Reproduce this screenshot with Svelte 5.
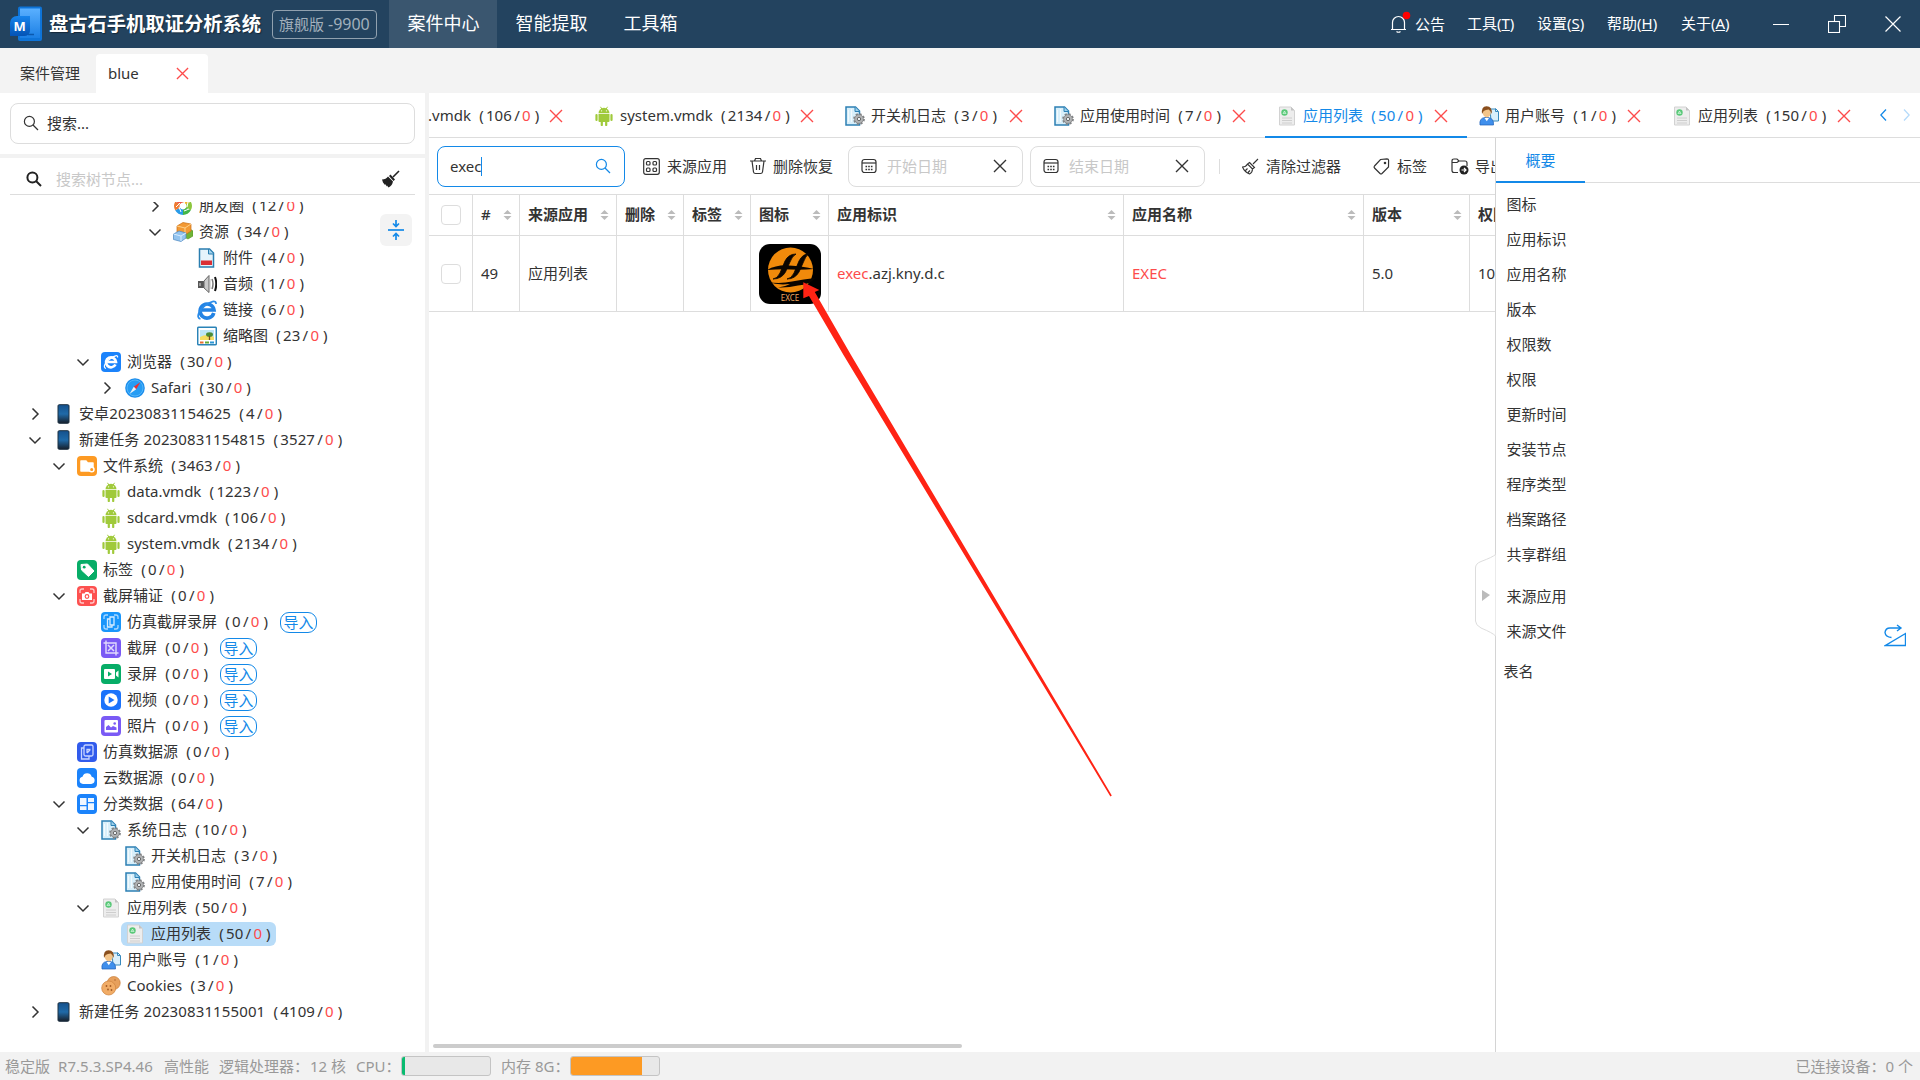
<script>
  const menus = ['案件中心', '智能提取', '工具箱'];
  const tools = [['工具', 'T'], ['设置', 'S'], ['帮助', 'H'], ['关于', 'A']];

  // [depth, arrow, icon, label, count, flags]
  const tree = [
    [4, 'r', 'moments', '朋友圈', '12'],
    [4, 'd', 'cubes', '资源', '34'],
    [5, '', 'attach', '附件', '4'],
    [5, '', 'audio', '音频', '1'],
    [5, '', 'ie', '链接', '6'],
    [5, '', 'thumb', '缩略图', '23'],
    [2, 'd', 'browser', '浏览器', '30'],
    [3, 'r', 'safari', 'Safari', '30'],
    [0, 'r', 'phone', '安卓20230831154625', '4'],
    [0, 'd', 'phone', '新建任务 20230831154815', '3527'],
    [1, 'd', 'folder', '文件系统', '3463'],
    [2, '', 'android', 'data.vmdk', '1223'],
    [2, '', 'android', 'sdcard.vmdk', '106'],
    [2, '', 'android', 'system.vmdk', '2134'],
    [1, '', 'tag', '标签', '0'],
    [1, 'd', 'camera', '截屏辅证', '0'],
    [2, '', 'simshot', '仿真截屏录屏', '0', 'import'],
    [2, '', 'crop', '截屏', '0', 'import'],
    [2, '', 'record', '录屏', '0', 'import'],
    [2, '', 'video', '视频', '0', 'import'],
    [2, '', 'photo', '照片', '0', 'import'],
    [1, '', 'simdata', '仿真数据源', '0'],
    [1, '', 'cloud', '云数据源', '0'],
    [1, 'd', 'grid', '分类数据', '64'],
    [2, 'd', 'log', '系统日志', '10'],
    [3, '', 'log', '开关机日志', '3'],
    [3, '', 'log', '应用使用时间', '7'],
    [2, 'd', 'applist', '应用列表', '50'],
    [3, '', 'applist', '应用列表', '50', 'selected'],
    [2, '', 'user', '用户账号', '1'],
    [2, '', 'cookie', 'Cookies', '3'],
    [0, 'r', 'phone', '新建任务 20230831155001', '4109']
  ].map(([depth, arrow, icon, label, count, flag]) => ({ depth: depth > 3 ? depth + 1 : depth, arrow, icon, label, count, flag }));

  const tabs = [
    { icon: 'android', label: 'system.vmdk', count: '2134', w: 251 },
    { icon: 'log', label: '开关机日志', count: '3', w: 209 },
    { icon: 'log', label: '应用使用时间', count: '7', w: 223 },
    { icon: 'applist', label: '应用列表', count: '50', w: 202, active: true },
    { icon: 'user', label: '用户账号', count: '1', w: 193 },
    { icon: 'applist', label: '应用列表', count: '150', w: 210 }
  ];

  const columns = ['#', '来源应用', '删除', '标签', '图标', '应用标识', '应用名称', '版本'];
  const fields = ['图标', '应用标识', '应用名称', '版本', '权限数', '权限', '更新时间', '安装节点', '程序类型', '档案路径', '共享群组'];
</script>

{#snippet count(n)}<span class="count"><i class="po">(</i>{n}<i class="sl">/</i><b>0</b><i class="pc">)</i></span>{/snippet}

{#snippet cross(size)}
  <svg class="cross" width={size} height={size} viewBox="0 0 14 14"><path d="M1 1 13 13M13 1 1 13" fill="none" stroke="currentColor" stroke-width="1.4" /></svg>
{/snippet}

{#snippet lens(size, sw)}
  <svg width={size} height={size} viewBox="0 0 16 16" fill="none" stroke="currentColor" stroke-width={sw}><circle cx="6.4" cy="6.4" r="5" /><path d="m10 10 5 5" /></svg>
{/snippet}

{#snippet calendar()}
  <svg width="16" height="16" viewBox="0 0 16 16" fill="none" stroke="#333" stroke-width="1.2"><rect x="1" y="1.5" width="14" height="13" rx="2.5" /><path d="M1 5h14" /><path d="M4.5 8.5h7M4.5 11.5h7" stroke-width="1.6" stroke-dasharray="1.6 1.1" /></svg>
{/snippet}

{#snippet icon(name)}
  <svg class="ic" width="20" height="20" viewBox="0 0 20 20">
    {#if name === 'moments'}
      <g fill="none" stroke-width="5.5"><path d="M10 3.8A6.2 6.2 0 0 1 15.4 7" stroke="#f4b52a" /><path d="M15.4 7a6.2 6.2 0 0 1 0 6" stroke="#8cc63e" /><path d="M15.4 13a6.2 6.2 0 0 1-5.4 3.2" stroke="#43b649" /><path d="M10 16.2A6.2 6.2 0 0 1 4.6 13" stroke="#299be8" /><path d="M4.6 13a6.2 6.2 0 0 1 0-6" stroke="#ee7a30" /><path d="M4.6 7A6.2 6.2 0 0 1 10 3.8" stroke="#ee5340" /></g>
      <path d="m8 4 4 3M15 6l-1 5M16 13l-5 2M8 16l-2-5M3 11l4-4" stroke="#fff" />
    {:else if name === 'cubes'}
      <path d="m12 9 5-2 3 2v5l-5 3-4-2z" fill="#6fb436" stroke="#528f25" stroke-width=".6" />
      <path d="m4 4 6-3.5L18 2v7l-6 4-8-3z" fill="#f39a35" stroke="#c96f14" stroke-width=".7" /><path d="m4 4 8 2 6-4M12 6v7" stroke="#ffd28c" fill="none" />
      <path d="m.5 12 5.5-3 7 2v5l-5 3.5-7.5-2z" fill="#93c4ef" stroke="#4a86c0" stroke-width=".7" /><path d="m.5 12 7.5 2 5-3M8 14v5" stroke="#d8edff" fill="none" />
    {:else if name === 'attach'}
      <path d="M2.5 1h10l4 4v14h-14z" fill="#e6f3fb" stroke="#2a7eb0" stroke-width="1.5" /><path d="M11.5 1v5h5" fill="#9fd0ec" stroke="#2a7eb0" /><path d="M4 12.500h11V17H4z" fill="#db2f35" />
    {:else if name === 'audio'}
      <path d="M1 7h6v7H1z" fill="#565656" /><path d="m7 7 5-5.500v17L7 14z" fill="#c9c9c9" stroke="#666" /><path d="M3 9v3M13.500 5v10" stroke="#ddd" /><path d="M15 5q2 5 0 10" fill="none" stroke="#777" stroke-width="1.500" /><path d="M18 3q2.500 7 0 14" fill="none" stroke="#111" stroke-width="2" />
    {:else if name === 'ie'}
      <path d="M16.800 13A7 7 0 1 1 17 10H5" fill="none" stroke="#2383e4" stroke-width="3.600" /><path d="M3.500 19C-1.500 18 2 10 8 5.500 13 1.500 19.500-.5 19 4" fill="none" stroke="#2b8ce9" stroke-width="1.700" />
    {:else if name === 'thumb'}
      <rect x=".7" y="1.200" width="18.600" height="17.600" rx="1" fill="#fff" stroke="#2a83b7" stroke-width="1.500" /><path d="M3 4h14v10H3z" fill="#bde6f8" /><path d="M3 11q7-4 14 0v3H3z" fill="#f4dd62" /><ellipse cx="12.500" cy="8.500" rx="3.500" ry="2.300" fill="#4c8c35" /><path d="M12.500 10v4" stroke="#754c24" stroke-width="1.300" /><path d="M3 16.500h3.500" stroke="#e66d31" stroke-width="2" /><path d="M8 16.500h4" stroke="#67a832" stroke-width="2" /><path d="M13 16.500h4" stroke="#2c96d4" stroke-width="2" />
    {:else if name === 'browser'}
      <rect width="20" height="20" rx="4" fill="#1b83fb" /><path d="M14.500 12.500A5 5 0 1 1 15 10H6.500" fill="none" stroke="#fff" stroke-width="2.700" /><path d="M5 16.500c-4-1 0-7 4-9.500 4-3.500 8.500-4.500 7.500-1.500" fill="none" stroke="#fff" stroke-width="1.200" />
    {:else if name === 'safari'}
      <circle cx="10" cy="10" r="9.800" fill="#1d8eec" /><circle cx="10" cy="10" r="8" fill="#259cf4" stroke="#52b6fb" /><path d="m15.500 4-4.300 7.200L8.800 8.800z" fill="#ee2f2f" /><path d="m4.500 16 4.300-7.200 2.400 2.400z" fill="#e9f1f8" />
    {:else if name === 'phone'}
      <defs><linearGradient id="ph" x2="0" y2="1"><stop offset="0" stop-color="#14518d" /><stop offset=".5" stop-color="#1f6aa8" /><stop offset="1" stop-color="#171f2a" /></linearGradient></defs><rect x="5" y=".7" width="11" height="18.600" rx="1.200" fill="url(#ph)" stroke="#1d3040" />
    {:else if name === 'folder'}
      <rect width="20" height="20" rx="4" fill="#fd9a23" /><path d="M4 5h5l1.500 2H16v8H4z" fill="none" stroke="#fff" stroke-width="1.500" stroke-linejoin="round" /><path d="M4 5h5l1.500 2H16v4l-4 4H4z" fill="#fff" /><circle cx="14.700" cy="13.500" r="2.300" fill="#fd9a23" stroke="#fff" stroke-width="1.500" />
    {:else if name === 'android'}
      <path d="M4.500 7.300a5.500 5.500 0 0 1 11 0z" fill="#a0ca3b" /><path d="M4.500 8.100h11v7a1 1 0 0 1-1 1h-9a1 1 0 0 1-1-1z" fill="#a0ca3b" /><path d="M2.500 9v5M17.500 9v5M7.800 15v4M12.200 15v4" stroke="#a0ca3b" stroke-width="2.200" stroke-linecap="round" /><path d="M6.500.8 7.800 3M13.500.8 12.200 3" stroke="#a0ca3b" /><circle cx="7.600" cy="4.800" r=".6" fill="#fff" /><circle cx="12.400" cy="4.800" r=".6" fill="#fff" />
    {:else if name === 'tag'}
      <rect width="20" height="20" rx="4" fill="#07ad67" /><path d="M4 4.500 10.500 4l6.500 7-5.500 5.500L4.500 10z" fill="#fff" stroke="#fff" stroke-linejoin="round" /><circle cx="7.200" cy="7.200" r="1.400" fill="#07ad67" />
    {:else if name === 'camera'}
      <rect width="20" height="20" rx="4" fill="#fd5150" /><path d="M3 7V5q0-2 2-2h2M13 3h2q2 0 2 2v2M17 13v2q0 2-2 2h-2M7 17H5q-2 0-2-2v-2" fill="none" stroke="#ffc9c9" stroke-width="1.300" /><path d="M5 7.500h2.500L8.500 6h3l1 1.500H15V14H5z" fill="#fff" /><circle cx="10" cy="10.500" r="1.800" fill="#fff" stroke="#fd5150" stroke-width="1.200" />
    {:else if name === 'simshot'}
      <rect width="20" height="20" rx="4" fill="#1996fb" /><path d="M3 7V5q0-2 2-2h2M13 3h2q2 0 2 2v2M17 13v2q0 2-2 2h-2M7 17H5q-2 0-2-2v-2" fill="none" stroke="#a8d7ff" stroke-width="1.300" /><path d="M9 5h4v8H9zM9 7H6.500v8H11v-2" fill="none" stroke="#d4ecff" stroke-width="1.300" />
    {:else if name === 'crop'}
      <rect width="20" height="20" rx="4" fill="#7a5af5" /><path d="M5 2.500V15h12.500M2.500 5H15v12.500" fill="none" stroke="#e1dafd" stroke-width="1.400" /><path d="m7 7 6 6M13 7l-6 6" stroke="#e1dafd" stroke-width="1.500" />
    {:else if name === 'record'}
      <rect width="20" height="20" rx="4" fill="#07ad67" /><rect x="3" y="5" width="11" height="10" rx="1" fill="#fff" /><path d="m7 7.500 4 2.500-4 2.500z" fill="#07ad67" /><path d="M15 8.500 17.500 6.500v7L15 11.500z" fill="#fff" />
    {:else if name === 'video'}
      <rect width="20" height="20" rx="4" fill="#1b73fb" /><circle cx="10" cy="10" r="6.700" fill="#fff" /><path d="m7.700 6.500 5.800 3.500-5.800 3.500z" fill="#1b73fb" />
    {:else if name === 'photo'}
      <rect width="20" height="20" rx="4" fill="#7a5af5" /><rect x="3.500" y="4" width="13.500" height="12.500" rx="1" fill="#fff" /><path d="m5 14 0-3 2.500-2 2.500 2.500 2-1.500 3.500 1.500V14z" fill="#7a5af5" /><circle cx="13.700" cy="7.500" r="1.300" fill="#7a5af5" />
    {:else if name === 'simdata'}
      <rect width="20" height="20" rx="4" fill="#315bec" /><rect x="7" y="3" width="9" height="11" rx="1.500" fill="none" stroke="#c8d5ff" stroke-width="1.300" /><path d="M7 6H4.500v11H12v-3M10 11V7.500h3.500M10 11l3-3" fill="none" stroke="#c8d5ff" stroke-width="1.300" />
    {:else if name === 'cloud'}
      <rect width="20" height="20" rx="4" fill="#1b83fb" /><path d="M6 16a3.700 3.700 0 0 1-.5-7.300 4.800 4.800 0 0 1 9.200 0A3.700 3.700 0 0 1 14.200 16z" fill="#fff" />
    {:else if name === 'grid'}
      <rect width="20" height="20" rx="4" fill="#1b83fb" /><path d="M3 4h6.500v7H3zM3 12.300h6.500V16H3zM11 4h6v4h-6zM11 9.300h6V16h-6z" fill="#fff" opacity=".93" />
    {:else if name === 'log'}
      <path d="M1 1h9.500l4 4v14H1z" fill="#d8effa" stroke="#2c80b4" stroke-width="1.500" /><path d="M3.500 4v12M6.500 3v13" stroke="#fff" opacity=".7" /><path d="M10 1v4.500h4.500" fill="#9dd0eb" stroke="#2c80b4" /><circle cx="14" cy="13" r="4.600" fill="#a7a9ab" stroke="#818487" stroke-width="2.600" stroke-dasharray="2 1.600" /><circle cx="14" cy="13" r="4.300" fill="#b2b4b6" stroke="#777" stroke-width=".5" /><circle cx="14" cy="13" r="1.700" fill="#e9eef1" stroke="#696969" />
    {:else if name === 'applist'}
      <path d="M2.500 1h11.500l3.500 3.500V19h-15z" fill="#ededed" stroke="#d2d2d2" /><path d="M14 1v3.500h3.500z" fill="#c3c3c3" /><circle cx="7.500" cy="6.500" r="3.200" fill="#59c878" /><path d="m6 8 1.500-3L9 8M6.500 7.300h2" fill="none" stroke="#e9fff0" stroke-width=".7" /><path d="M5 12h10M5 14.500h10M5 17h10" stroke="#cecece" />
    {:else if name === 'user'}
      <path d="M11 3h6l2.500 2.500V15H12z" fill="#d9effb" stroke="#3789bd" /><path d="M16.500 2.500v3H19" fill="none" stroke="#3789bd" /><path d="M1 19q-1-7 5-7.500h3q6 .5 5.500 7.500z" fill="#3f8fec" stroke="#1d5fb8" stroke-width=".7" /><path d="m5.500 12 2.300 3.200L10 12z" fill="#fff" /><ellipse cx="7.800" cy="6.500" rx="4" ry="5" fill="#f3c489" /><path d="M3 8Q2 .5 7.500.300 13.500.2 12.700 8q-1-3.500-3-4.500-3 0-5 1.500z" fill="#8a4f1d" />
    {:else if name === 'cookie'}
      <circle cx="12.700" cy="7" r="6.500" fill="#e7a05c" stroke="#c97c37" stroke-width=".7" /><circle cx="7.700" cy="12" r="7" fill="#f1ac66" stroke="#cf833c" stroke-width=".7" /><g fill="#a45b25"><circle cx="5.500" cy="10" r=".9" /><circle cx="9.500" cy="10" r=".9" /><circle cx="7" cy="13.500" r=".9" /><circle cx="10.500" cy="14" r=".9" /><circle cx="14" cy="4" r=".7" /></g>
    {/if}
  </svg>
{/snippet}

<div class="app">
  <header>
    <div class="brand">
      <svg width="34" height="38" viewBox="0 0 34 38">
        <defs>
          <linearGradient id="b1" x2="0" y2="1"><stop offset="0" stop-color="#5ab0ff" /><stop offset="1" stop-color="#1b7fe4" /></linearGradient>
          <linearGradient id="b2" x2="0" y2="1"><stop offset="0" stop-color="#1684ec" /><stop offset="1" stop-color="#0453b4" /></linearGradient>
        </defs>
        <rect x="9" y="1.500" width="24" height="34.500" rx="2" fill="#0e74d8" />
        <rect x="11" y="3.500" width="20" height="29.500" fill="url(#b1)" />
        <path d="M8 11h13v15a6 6 0 0 1-6 5H1V18a7 7 0 0 1 7-7z" fill="url(#b2)" />
        <path d="M19 29.500h6" stroke="#0b59ae" stroke-width="1.500" />
        <text x="10.700" y="26" text-anchor="middle" class="logo-m">M</text>
      </svg>
      <h1>盘古石手机取证分析系统</h1>
      <span class="edition">旗舰版<em>-9900</em></span>
    </div>
    <nav>
      {#each menus as m, i}<span class:on={i === 0}>{m}</span>{/each}
    </nav>
    <div class="tools">
      <span class="notice">
        <svg width="20" height="20" viewBox="0 0 20 20" fill="none" stroke="#fff" stroke-width="1.200"><path d="M2 15.500h15M3.500 15V8.500a6 6 0 0 1 12 0V15M7.500 17.500q2 1.500 4 0" /><circle cx="17.500" cy="1.500" r="3.800" fill="#f00" stroke="none" /></svg>
        公告
      </span>
      {#each tools as [t, k]}<span class="tool">{t}(<u>{k}</u>)</span>{/each}
    </div>
    <div class="win">
      <svg width="16" height="18" viewBox="0 0 16 18"><path d="M0 9.500h16" stroke="#fff" /></svg>
      <svg width="18" height="18" viewBox="0 0 18 18" fill="none" stroke="#fff" stroke-width="1.100"><path d="M6.500 6.500v-6h11v11h-6" /><rect x=".5" y="6.500" width="11" height="11" /></svg>
      <svg width="16" height="16" viewBox="0 0 16 16"><path d="m.5.5 15 15M15.500.5l-15 15" stroke="#fff" stroke-width="1.200" /></svg>
    </div>
  </header>

  <div class="cases">
    <span class="case">案件管理</span>
    <span class="case open">blue<span class="x">{@render cross(13)}</span></span>
  </div>

  <main>
    <aside>
      <div class="search-wrap"><div class="search">{@render lens(16, 1.2)}<span>搜索...</span></div></div>
      <div class="node-search">
        {@render lens(16, 2)}<span>搜索树节点...</span>
        <svg width="19" height="18" viewBox="0 0 19 18"><path d="m18 1-6 6" stroke="#222" stroke-width="1.600" /><path d="m9.500 4.500 4.500 5-1.500 1.500L8 6zM7 6.500l5 5q-1 4.500-4.500 6l-1.500-2 0 1-2-2.500v1L2 12.500l-1-3q4 0 6-3z" fill="#222" /></svg>
      </div>
      <div class="tree">
        <div class="rows">
          {#each tree as n}
            <div class="row" style:padding-left="{24 + n.depth * 24}px">
              <span class="arrow">
                {#if n.arrow}
                  <svg width="14" height="14" viewBox="0 0 14 14"><path d={n.arrow === 'd' ? 'M1.500 4.500 7 10l5.500-5.500' : 'M4.500 1.500 10 7l-5.500 5.500'} fill="none" stroke="#333" stroke-width="1.500" /></svg>
                {/if}
              </span>
              <span class="node" class:selected={n.flag === 'selected'} class:device={n.icon === 'phone'}>
                {@render icon(n.icon)}<span class="label">{n.label}</span>{@render count(n.count)}
              </span>
              {#if n.flag === 'import'}<span class="import">导入</span>{/if}
            </div>
          {/each}
        </div>
        <span class="collapse">
          <svg width="16" height="22" viewBox="0 0 16 22" fill="none" stroke="#1389e8" stroke-width="1.700"><path d="M0 11h16" /><path d="M8 1v6M5 4.500l3 3 3-3M8 21v-6M5 17.500l3-3 3 3" /></svg>
        </span>
      </div>
    </aside>

    <section class="work">
      <div class="tabs">
        <div class="tab clipped"><span class="label">.vmdk</span>{@render count('106')}<span class="x">{@render cross(14)}</span></div>
        {#each tabs as t}
          <div class="tab" class:active={t.active} style:width="{t.w}px">{@render icon(t.icon)}<span class="label">{t.label}</span>{@render count(t.count)}<span class="x">{@render cross(14)}</span></div>
        {/each}
        <div class="pager">
          <svg width="7" height="12" viewBox="0 0 7 12"><path d="M6 .5.8 6 6 11.500" fill="none" stroke="#1389e8" stroke-width="1.300" /></svg>
          <svg width="7" height="12" viewBox="0 0 7 12"><path d="M1 .5 6.200 6 1 11.500" fill="none" stroke="#b4dafa" stroke-width="1.300" /></svg>
        </div>
      </div>

      <div class="body">
        <div class="list">
          <div class="bar">
            <div class="query"><span>exec</span><i class="caret"></i>{@render lens(16, 1.2)}</div>
            <span class="act a1"><svg width="17" height="17" viewBox="0 0 17 17" fill="none" stroke="#333" stroke-width="1.200"><rect x=".7" y=".7" width="15.600" height="15.600" rx="2" /><rect x="3.500" y="3.500" width="3.500" height="3.500" rx="1" /><rect x="10" y="3.500" width="3.500" height="3.500" rx="1" /><rect x="3.500" y="10" width="3.500" height="3.500" rx="1" /><rect x="10" y="10" width="3.500" height="3.500" rx="1" /></svg>来源应用</span>
            <span class="act a2"><svg width="16" height="18" viewBox="0 0 16 18" fill="none" stroke="#333" stroke-width="1.200"><path d="M0 4h16M4.500 4l1-2.500h5l1 2.500M2 4l1.500 11q.3 1.500 2 1.500h5q1.700 0 2-1.500L14 4M6.500 8v5M9.500 8v5" /></svg>删除恢复</span>
            <div class="date">{@render calendar()}<span>开始日期</span>{@render cross(14)}</div>
            <div class="date">{@render calendar()}<span>结束日期</span>{@render cross(14)}</div>
            <i class="sep"></i>
            <span class="act a3"><svg width="17" height="17" viewBox="0 0 17 17" fill="none" stroke="#333" stroke-width="1.100"><path d="m16 1-5 5M7.500 4.500l5 5-2 1.500-5-5zM5.500 6q-1.500 3-5 3 2 5 7 7 3-1.500 3-5M3.500 12.500l2-2M6 14.500l2-2" /></svg>清除过滤器</span>
            <span class="act a4"><svg width="17" height="17" viewBox="0 0 17 17" fill="none" stroke="#333" stroke-width="1.200"><path d="M7.500 1.500 14 .8q1.500 0 1.600 1.500L15.500 9 9 15.500q-1 .8-2 0L1.500 10q-.8-1 0-2z" /><circle cx="12" cy="5" r=".7" fill="#333" /></svg>标签</span>
            <span class="act a5"><svg width="18" height="17" viewBox="0 0 18 17" fill="none" stroke="#333" stroke-width="1.200"><path d="M7 14.500H3q-2 0-2-2V3q0-2 2-2h3l2 2h6q2 0 2 2v3M1 4.500h5L8 3" /><circle cx="13" cy="12" r="4.500" fill="#222" stroke="none" /><path d="M10.500 12h4.500M13 10l2 2-2 2" stroke="#fff" /></svg>导出</span>
          </div>

          <div class="grid head">
            <span class="cell chk"><i class="box"></i></span>
            {#each columns as c}
              <span class="cell"><span class="txt">{c}</span><svg class="sort" width="9" height="10" viewBox="0 0 9 10"><path d="M4.500 0 8.500 4H.5zM4.500 10l-4-4h8z" fill="#bbb" /></svg></span>
            {/each}
            <span class="cell last"><span class="txt">权限数</span></span>
          </div>
          <div class="grid data">
            <span class="cell chk"><i class="box"></i></span>
            <span class="cell"><span class="txt">49</span></span>
            <span class="cell"><span class="txt">应用列表</span></span>
            <span class="cell"></span>
            <span class="cell"></span>
            <span class="cell">
              <svg class="appicon" width="62" height="60" viewBox="0 0 62 60">
                <rect width="62" height="60" rx="11" fill="#000" />
                <circle cx="31.500" cy="26" r="22.500" fill="#f08a0b" />
                <path d="M8 26q10-5.500 22-4.500 14 .5 25 3.500-12 1-23 .5T8 26z" fill="#0a0500" />
                <path d="M14 35q4.500-.5 7-6L26 17q3.500-7 11-7-4 2-6.500 9l-4 9q-4 7-12.500 7zM28 35q4.500-.5 7-6l5-12q3.500-7 10-7.500-3.500 2.500-6 9.500l-4 9q-4 7-12 7z" fill="#0a0500" stroke="#0a0500" stroke-width=".8" />
                <path d="M9 38q12 2 24-.5T56 34q-5 7-17 7.500-10 2.500-20 2 8-1.500 12-3.500-12 1.500-22-2z" fill="#0a0500" />
                <text x="31" y="57" text-anchor="middle" class="exce">EXCE</text>
              </svg>
            </span>
            <span class="cell"><span class="txt"><mark>exec</mark>.azj.kny.d.c</span></span>
            <span class="cell"><span class="txt"><mark>EXEC</mark></span></span>
            <span class="cell"><span class="txt">5.0</span></span>
            <span class="cell last"><span class="txt">10</span></span>
          </div>
          <div class="hscroll"><i></i></div>
        </div>

        <div class="detail">
          <div class="dtabs"><span>概要</span></div>
          <div class="fields">
            {#each fields as f}<span>{f}</span>{/each}
            <span class="gap">来源应用</span>
            <span class="jump">来源文件
              <svg width="22" height="23" viewBox="0 0 22 23" fill="none" stroke="#1389e8" stroke-width="1.400"><path d="M7.500 13.500Q1.500 13 1 8.500 1.500 4 6 4h10M13 1l4 3-4 3M1.500 21.500h20v-12z" /></svg>
            </span>
            <span class="table-name">表名</span>
          </div>
          <svg class="handle" width="21" height="84" viewBox="0 0 21 84"><path d="M20.500.5v1Q18 4 6 8.500.5 10.500.5 15v53q0 4 5.500 7 12 5 14.500 8" fill="#fff" stroke="#ddd" /><path d="m7 37 8 5-8 6z" fill="#bbb" /></svg>
        </div>
      </div>
    </section>
  </main>

  <footer>
    <span class="f1">稳定版</span><span class="f2">R7.5.3.SP4.46</span><span class="f3">高性能</span><span class="f4">逻辑处理器：</span><span class="f5">12 核</span><span class="f6">CPU：</span>
    <i class="meter"><b class="cpu"></b></i>
    <span class="f7">内存 8G：</span>
    <i class="meter"><b class="mem"></b></i>
    <span class="devices">已连接设备：0 个</span>
  </footer>

  <svg class="pointer" width="320" height="520" viewBox="0 0 320 520"><path d="M3.300 2.300 19.300 10l-4.500 2L51 75l260.800 440.500-1.400.9L43.500 75 9 16l-5.700 2.300z" fill="#ff2314" /></svg>
</div>

<style>
  :global(body) { margin: 0; background: #fff; overflow: hidden; }
  .app { position: relative; width: 1920px; height: 1080px; display: flex; flex-direction: column; overflow: hidden; font: 15px/20px "Noto Sans", "Noto Sans CJK SC", sans-serif; color: #333; white-space: nowrap; background: #fff; }
  .app * { box-sizing: border-box; }
  svg { flex: none; display: block; }
  i, em { font-style: normal; }

  header { height: 48px; flex: none; display: flex; background: #23435f; color: #fff; }
  .brand { width: 389px; display: flex; align-items: center; padding-left: 9px; }
  .logo-m { font: bold 13px "Noto Sans", sans-serif; fill: #fff; }
  h1 { margin: 0 0 2px 6px; width: 214px; font: 700 19.300px/28px "Noto Sans CJK SC", sans-serif; text-shadow: 1px 1px 1px #0006; }
  .edition { width: 105px; height: 29px; margin-left: 9px; margin-top: 1px; border: 1px solid #91a1af; border-radius: 4px; color: #a2b0bc; display: flex; align-items: center; padding: 0 0 1px 6px; gap: 4px; }
  .edition em { font-size: 16px; }
  nav { display: flex; font-size: 18px; line-height: 46px; }
  nav span { padding: 0 17.500px 0 18.500px; }
  nav .on { background: #3a566f; }
  .tools { margin-left: auto; display: flex; align-items: center; gap: 22px; padding-bottom: 2px; }
  .notice { display: flex; align-items: center; gap: 6px; padding-top: 1px; }
  .notice svg { overflow: visible; }
  .tool { width: 48px; }
  .tool:nth-child(4) { width: 52px; }
  .tool:last-child { width: 51px; }
  .win { display: flex; align-items: center; gap: 39px; padding: 0 19px 0 41px; }

  .cases { height: 45px; flex: none; background: #f3f3f3; display: flex; align-items: flex-end; }
  .case { width: 96px; height: 39px; line-height: 39px; padding-left: 20px; }
  .open { width: 112px; padding: 0 19px 0 12px; background: #fff; border-radius: 4px 4px 0 0; display: flex; justify-content: space-between; align-items: center; }
  .x { color: #fd4b4b; display: flex; }

  main { flex: 1; display: flex; min-height: 0; }
  aside { width: 429px; flex: none; border-right: 4px solid #f2f2f2; display: flex; flex-direction: column; min-height: 0; }
  .search-wrap { padding: 10px 10px; height: 65px; flex: none; border-bottom: 4px solid #f2f2f2; }
  .search { height: 41px; border: 1px solid #ddd; border-radius: 8px; display: flex; align-items: center; gap: 8px; padding: 0 0 2px 12px; }
  .node-search { height: 37px; flex: none; margin: 0 10px; border-bottom: 1px solid #ddd; display: flex; align-items: center; padding: 5px 15px 0 16px; gap: 14px; color: #222; }
  .node-search span { flex: 1; color: #c8c8c8; }
  .tree { position: relative; flex: 1; min-height: 0; margin-top: 7px; overflow: hidden; }
  .rows { margin-top: -9px; }
  .row { height: 26px; display: flex; align-items: center; }
  .arrow { width: 22px; padding-left: 4px; flex: none; }
  .node { display: flex; align-items: center; height: 24px; padding: 0 5px 0 7px; border-radius: 6px; }
  .selected { background: #b8dcf8; margin-left: 3px; padding-left: 4px; }
  .device .label { letter-spacing: .12px; }
  .ic { margin-right: 6px; }
  .label, .count, .txt { padding-bottom: 2px; }
  .count { margin-left: 6px; letter-spacing: .1px; }
  .count b { font-weight: 400; color: #fd4b4b; }
  .count i { display: inline-block; letter-spacing: 0; }
  .po { width: 9px; text-align: center; }
  .sl { width: 10px; text-align: center; }
  .pc { width: 8.500px; text-align: right; }
  .import { margin-left: 7px; width: 37px; height: 21px; border: 1px solid #1389e8; border-radius: 9px; color: #1389e8; line-height: 19px; text-align: center; margin-top: 1px; }
  .collapse { position: absolute; left: 380px; top: 12px; width: 32px; height: 32px; border-radius: 6px; background: #f3f3f3; display: grid; place-items: center; }

  .work { flex: 1; min-width: 0; display: flex; flex-direction: column; }
  .tabs { height: 45px; flex: none; display: flex; border-bottom: 1px solid #ddd; }
  .tab { flex: none; height: 45px; display: flex; align-items: center; padding: 0 19px 0 12px; }
  .clipped { width: 153px; padding-left: 0; }
  .clipped .label { margin-left: -1px; }
  .tab .x { margin-left: auto; }
  .active { color: #1389e8; border-bottom: 2px solid #1389e8; padding-top: 2px; }
  .pager { display: flex; align-items: center; gap: 16px; padding-left: 10px; }

  .body { flex: 1; display: flex; min-height: 0; }
  .list { width: 1066px; flex: none; overflow: hidden; display: flex; flex-direction: column; }
  .bar { height: 56px; flex: none; display: flex; align-items: center; padding-left: 8px; }
  .query { width: 188px; height: 41px; flex: none; border: 1px solid #1389e8; border-radius: 8px; display: flex; align-items: center; padding: 0 13px 0 12px; color: #1389e8; }
  .query span { color: #333; }
  .caret { width: 1px; height: 19px; background: #1389e8; margin-right: auto; }
  .act { display: flex; align-items: center; gap: 7px; flex: none; }
  .a1 { margin-left: 18px; }
  .a2 { margin-left: 23px; }
  .a3 { margin-left: 22px; }
  .a4 { margin-left: 32px; }
  .a5 { margin-left: 24px; gap: 6px; }
  .date { width: 175px; height: 41px; flex: none; margin-left: 7px; border: 1px solid #ddd; border-radius: 8px; display: flex; align-items: center; padding: 0 15px 0 12px; color: #333; }
  .a2 + .date { margin-left: 15px; }
  .date span { flex: 1; margin-left: 10px; color: #c8c8c8; }
  .sep { width: 1px; height: 15px; background: #ddd; margin-left: 14px; flex: none; }
  .grid { flex: none; display: grid; grid-template-columns: 44px 47px 97px 67px 67px 78px 295px 240px 106px 25px; border-bottom: 1px solid #ddd; }
  .cell { border-right: 1px solid #ddd; display: flex; align-items: center; padding: 0 7px 0 8px; min-width: 0; }
  .cell.last { border-right: 0; padding-right: 0; overflow: hidden; }
  .head { height: 42px; border-top: 1px solid #ddd; font-weight: 700; }
  .head .cell:nth-child(2) { font-weight: 500; }
  .data { height: 76px; }
  .chk { padding-left: 12px; }
  .box { width: 20px; height: 20px; border: 1px solid #ddd; border-radius: 4px; }
  .sort { margin-left: auto; }
  .exce { font: 8px "Noto Sans", sans-serif; fill: #f0a860; }
  mark { background: none; color: #fd4b4b; }
  .hscroll { margin-top: auto; height: 8px; padding-left: 4px; }
  .hscroll i { display: block; width: 529px; height: 4px; border-radius: 2px; background: #ccc; }

  .detail { position: relative; flex: 1; border-left: 1px solid #d4d4d4; }
  .dtabs { height: 45px; border-bottom: 1px solid #ddd; }
  .dtabs span { display: block; width: 89px; height: 45px; line-height: 45px; text-align: center; color: #1389e8; border-bottom: 2px solid #1389e8; }
  .fields { display: flex; flex-direction: column; padding: 4px 14px 0 10.500px; }
  .fields span { height: 35px; line-height: 34px; }
  .fields .gap { margin-top: 7px; }
  .fields .jump { display: flex; justify-content: space-between; }
  .jump svg { margin-top: 10px; }
  .fields .table-name { margin: 5px 0 0 -3px; }
  .handle { position: absolute; left: -21px; top: 415px; }

  footer { height: 28px; flex: none; background: #f2f2f2; color: #999; display: flex; align-items: center; padding: 0 7px 0 5px; }
  .f1 { width: 53px; } .f2 { width: 106px; letter-spacing: .05px; } .f3 { width: 55px; } .f4 { width: 91px; } .f5 { width: 46px; } .f6 { width: 45px; } .f7 { width: 69px; margin-left: 10px; }
  .meter { width: 90px; height: 20px; flex: none; border: 1px solid #c4c4c4; border-radius: 3px; background: #e8e8e8; overflow: hidden; display: flex; }
  .cpu { width: 3px; background: #09bb70; }
  .mem { width: 71px; background: #fd9a23; }
  .devices { margin-left: auto; }
  .pointer { position: absolute; left: 800px; top: 280px; pointer-events: none; }
</style>
